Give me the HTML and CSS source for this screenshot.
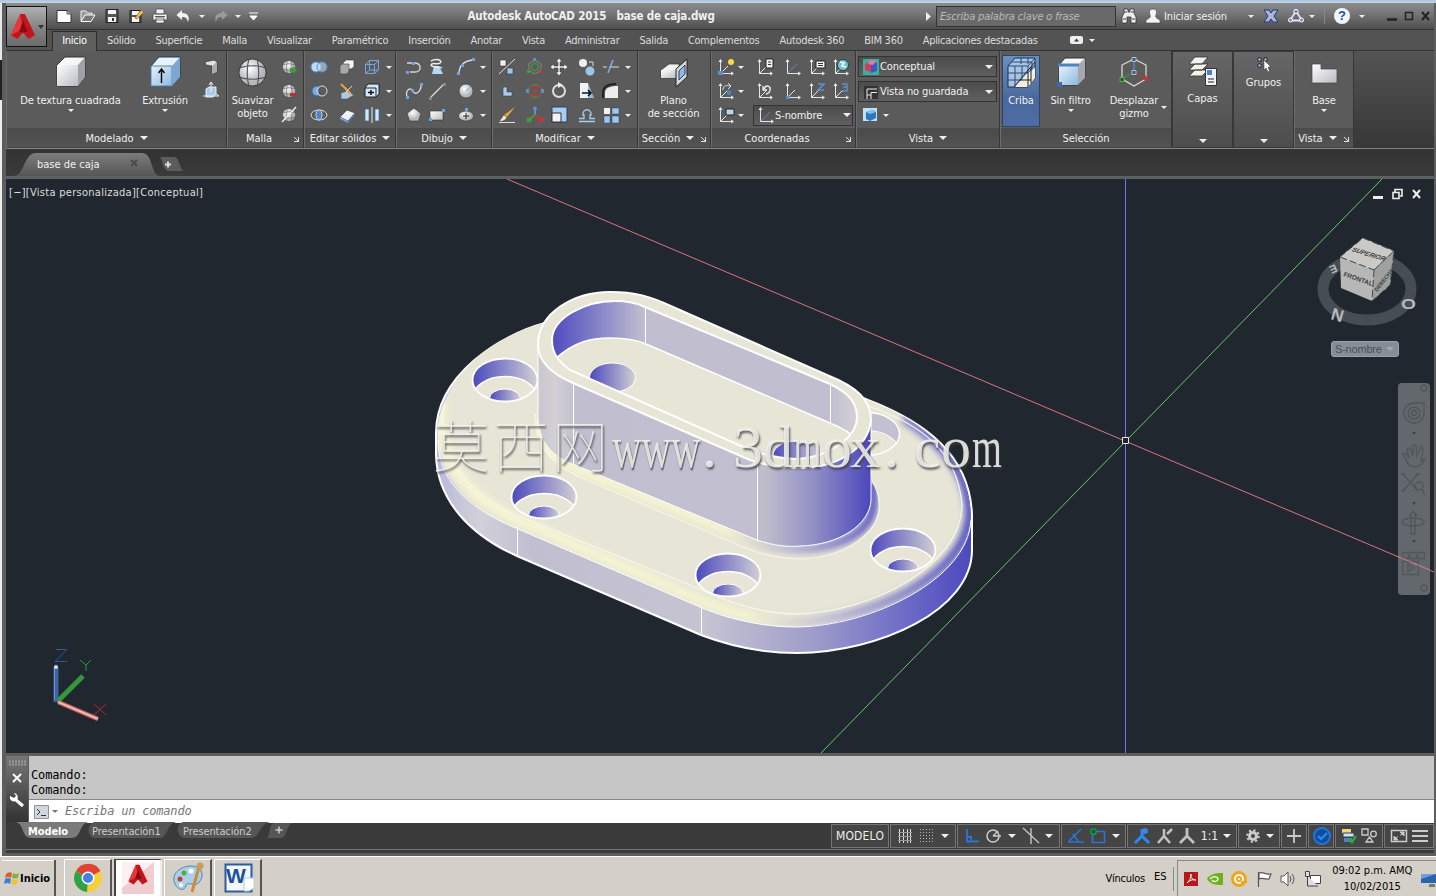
FILE: index.html
```html
<!DOCTYPE html>
<html lang="es">
<head>
  <meta charset="UTF-8">
  <title>Autodesk AutoCAD 2015 - base de caja.dwg</title>
  <link rel="stylesheet" href="styles.css">
</head>
<body>

<!-- shared icons -->
<svg class="sprite" width="0" height="0">
  <defs>
    <linearGradient id="gBox" x1="0" y1="0" x2="1" y2="1"><stop offset="0" stop-color="#fff"/><stop offset="1" stop-color="#b9bbc2"/></linearGradient>
    <linearGradient id="gBlue" x1="0" y1="0" x2="1" y2="1"><stop offset="0" stop-color="#e4f3ff"/><stop offset="1" stop-color="#8fb8de"/></linearGradient>
    <radialGradient id="gBall" cx=".4" cy=".35"><stop offset="0" stop-color="#fff"/><stop offset="1" stop-color="#b4b6ba"/></radialGradient>
    <symbol id="axes" viewBox="0 0 18 18"><path d="M3.500 2V15.500H16M3.500 15.500L11 8" fill="none" stroke="#e6e6e6"/><path d="M1.500 4L3.500 1L5.500 4zM14 13.500L17 15.500L14 17.500z" fill="#eee"/></symbol>
    <symbol id="axesb" viewBox="0 0 18 18"><path d="M3.500 2V15.500H16" fill="none" stroke="#e6e6e6"/><path d="M4 15L13 6" stroke="#5b82c4"/><path d="M1.500 4L3.500 1L5.500 4zM14 13.500L17 15.500L14 17.500z" fill="#eee"/></symbol>
    <symbol id="ball" viewBox="0 0 30 30"><circle cx="15" cy="15" r="14" fill="url(#gBall)" stroke="#222" stroke-width=".8"/><path d="M2 10Q15 6 28 10M2 20Q15 24 28 20M11 2Q8 15 11 28M20 2Q23 15 20 28" fill="none" stroke="#50545c" stroke-width="1.2"/></symbol>
    <symbol id="redA" viewBox="0 0 28 30"><path d="M11 1H16L27 24L20 28L14 21L8 28L1 24z" fill="#c3161c"/><path d="M11 1L14 17L1 24z" fill="#e5383b"/><path d="M14 8L19 20L14 21L10 20z" fill="#8d0b10"/></symbol>
  </defs>
</svg>

<div class="app">

  <header class="titlebar">
    <div class="app-button">
      <svg width="26" height="28"><use href="#redA"/></svg>
      <i class="caret dark"></i>
    </div>
    <div class="qat">
      <svg width="18" height="16"><path d="M2 2.500H12L16 6V14.500H2z" fill="#fff" stroke="#333"/><path d="M12 2.500V6H16" fill="#bbb" stroke="#555"/></svg>
      <svg width="18" height="16"><path d="M2 13V3H7L8 5H13V7" fill="#999" stroke="#eee"/><path d="M2 13.500L6 7H16L12 13.500z" fill="#777" stroke="#fff"/></svg>
      <svg width="18" height="16"><path d="M3 1.500H15V14.500H3z" fill="#555" stroke="#222"/><path d="M5 2H13V6H5zM5 9H13V14H5z" fill="#f4f4f4"/><path d="M9 10H11V13H9z" fill="#333"/></svg>
      <svg width="18" height="16"><path d="M3 2.500H14V14.500H3z" fill="#555" stroke="#222"/><path d="M5 3H12V7H5zM5 9H12V14H5z" fill="#f4f4f4"/><path d="M8 10L14 2L17 4L10 11z" fill="#f0c050" stroke="#74501a" stroke-width=".6"/></svg>
      <svg width="18" height="16"><path d="M5 1H13V6H5zM2 6H16V12H2zM5 10H13V15H5z" fill="#f2f2f2" stroke="#444" stroke-width=".7"/><path d="M4 8.500H14" stroke="#555"/></svg>
      <svg width="18" height="16"><path d="M1.500 7L7 2V5C13 5 15 9 13 14C12 10 11 9 7 9V12z" fill="#f2f2f2"/></svg>
      <i class="caret"></i>
      <svg width="18" height="16"><path d="M16.500 7L11 2V5C5 5 3 9 5 14C6 10 7 9 11 9V12z" fill="#9a9a9a"/></svg>
      <i class="caret"></i>
      <svg width="9" height="9"><path d="M0 1H9M1 4H8L4.500 8z" stroke="#fff" fill="#fff"/></svg>
    </div>
    <h1>Autodesk AutoCAD 2015 &nbsp; base de caja.dwg</h1>
    <div class="infocenter">
      <svg width="6" height="9"><path d="M0 0L5 4.500L0 9z" fill="#eee"/></svg>
      <div class="search">Escriba palabra clave o frase</div>
      <svg width="16" height="16"><path d="M3 1H7V4H9V1H13V5L15 9V15H10V9H6V15H1V9L3 5z" fill="#eee" stroke="#333" stroke-width=".8"/><path d="M2 11H5M11 11H14M3 4H6M10 4H13" stroke="#444"/></svg>
      <svg width="16" height="16"><path d="M8 1C12 1 12 4 11 7C10 9 11 10 15 12V15H1V12C5 10 6 9 5 7C4 4 4 1 8 1z" fill="#f4f4f4" stroke="#444" stroke-width=".6"/></svg>
      <span class="login">Iniciar sesión</span>
      <i class="caret"></i>
      <svg width="16" height="16"><path d="M1 2H6L8 5L10 2H15L11 8L15 14H10L8 11L6 14H1L5 8z" fill="#a9b6dc" stroke="#20397e"/></svg>
      <svg width="18" height="16"><path d="M9 3L15 12.500H3z" fill="none" stroke="#dfe6f5" stroke-width="1.800"/><circle cx="9" cy="3.500" r="2.200" fill="#6c89c4" stroke="#fff"/><circle cx="3.500" cy="12" r="2" fill="#6c89c4" stroke="#fff"/><circle cx="14.500" cy="12" r="2" fill="#6c89c4" stroke="#fff"/></svg>
      <i class="caret"></i>
      <span class="sep"></span>
      <span class="help">?</span>
      <i class="caret"></i>
      <svg class="winbtns" width="48" height="12"><path d="M1 9.500H11" stroke="#222" stroke-width="2.500"/><path d="M19.500 2.500H26.500V9.500H19.500z" fill="none" stroke="#222" stroke-width="1.500"/><path d="M36 2L43 10M43 2L36 10" stroke="#222" stroke-width="2"/></svg>
    </div>
  </header>

  <nav class="tabs">
    <span class="active">Inicio</span><span>Sólido</span><span>Superficie</span><span>Malla</span><span>Visualizar</span><span>Paramétrico</span><span>Inserción</span><span>Anotar</span><span>Vista</span><span>Administrar</span><span>Salida</span><span>Complementos</span><span>Autodesk 360</span><span>BIM 360</span><span>Aplicaciones destacadas</span>
    <svg width="13" height="9"><rect width="13" height="8" rx="2" fill="#eee"/><path d="M4 5.500H9L6.500 2.500z" fill="#333"/></svg>
    <i class="caret"></i>
  </nav>

  <section class="ribbon">
    <div class="panel p-model">
      <div class="body">
        <div class="big wide">
          <svg width="34" height="34"><path d="M3 10L11 2H31V22L24 31H3z" fill="#f6f6f7" stroke="#333"/><path d="M3 10H24V31H3z" fill="url(#gBox)"/><path d="M24 10L31 2V22L24 31z" fill="#9fa1a8"/></svg>
          <span>De textura cuadrada</span><i class="caret"></i>
        </div>
        <div class="big ext">
          <svg width="34" height="34"><path d="M3 11L11 2H32V22L24 31H3z" fill="#e5f3ff" stroke="#203a58"/><path d="M3 11H24V31H3z" fill="url(#gBlue)" stroke="#5d86ad"/><path d="M24 11L32 2V22L24 31z" fill="#7ba7d0"/><path d="M13.500 28V15M10.500 18L13.500 14L16.500 18" stroke="#111" stroke-width="1.500" fill="none"/></svg>
          <span>Extrusión</span><i class="caret"></i>
        </div>
        <div class="grid g1">
          <svg width="18" height="18"><path d="M3 4L12 2L15 4V14L10 16V8L4 7z" fill="#e0e2e6" stroke="#333" stroke-width=".7"/><path d="M10 8L15 4V14L10 16z" fill="#a7abb4"/></svg>
          <svg width="18" height="18"><path d="M4 7L7 5H14V12L11 15H4z" fill="#a9cbea" stroke="#eee"/><path d="M9 10V0M7 3L9 0L11 3M1 14H17M14 12L17 14" stroke="#eee" fill="none"/></svg>
        </div>
      </div>
      <footer>Modelado <i class="caret big-c"></i></footer>
    </div>

    <div class="panel p-mesh">
      <div class="body">
        <div class="big mesh"><svg width="34" height="34"><use href="#ball" x="2" y="3" width="29" height="29"/></svg><span>Suavizar<br>objeto</span></div>
        <div class="grid g1">
          <svg width="18" height="18"><use href="#ball" x="2" y="2" width="14" height="14"/><path d="M10 10H13V8L17 12L13 16V14H10z" fill="#3f9b35"/></svg>
          <svg width="18" height="18"><use href="#ball" x="2" y="2" width="14" height="14"/><path d="M10 11H17V14H10z" fill="#a93636"/></svg>
          <svg width="18" height="18"><use href="#ball" x="2" y="2" width="14" height="14"/><path d="M2 16L16 1" stroke="#eee" stroke-width="1.500"/></svg>
        </div>
      </div>
      <footer class="with-launch">Malla<i class="launch"></i></footer>
    </div>

    <div class="panel p-solid">
      <div class="body"><div class="grid g-solid">
        <svg width="18" height="18"><circle cx="6" cy="9" r="5" fill="#bcdcf7" stroke="#5e8dc8"/><circle cx="12" cy="9" r="5" fill="#bcdcf7" fill-opacity=".6" stroke="#5e8dc8"/></svg>
        <svg width="18" height="18"><path d="M5 5L8 2H16V9L13 11H5z" fill="#f4f4f4" stroke="#333" stroke-width=".6"/><path d="M2 8L4 6H11V13L9 16H2z" fill="#a5a7ad" stroke="#444" stroke-width=".6"/></svg>
        <svg width="18" height="18"><path d="M2.500 6.500H11.500V15.500H2.500zM2.500 6.500L6.500 2.500H15.500L11.500 6.500M15.500 2.500V12L11.500 15.500M6.500 2.500V12H15.500M6.500 12L2.500 15.500" fill="none" stroke="#77a5dc"/></svg>
        <i class="caret"></i>
        <svg width="18" height="18"><circle cx="7" cy="9" r="5" fill="#7ea9dc" stroke="#3667aa"/><circle cx="12" cy="9" r="5" fill="#5a5a5a" stroke="#ddd"/><path d="M9.500 4.500C7 7 7 11 9.500 13.500" fill="none" stroke="#a9cdf2"/></svg>
        <svg width="18" height="18"><path d="M3 11L9 9L16 13L9 17H3z" fill="#a9c9ea" stroke="#555" stroke-width=".6"/><path d="M3 2L13 12" stroke="#eba43d" stroke-width="2"/><path d="M14 4L8 10" stroke="#ddd"/></svg>
        <svg width="18" height="18"><path d="M2 6L5 2H16V12L13 15H2z" fill="#d3e8fa" stroke="#222"/><path d="M2 6H13V15" stroke="#222" fill="none"/><path d="M5 10.500H11M8 8V13" stroke="#111" stroke-width="1.500"/></svg>
        <i class="caret"></i>
        <svg width="18" height="18"><ellipse cx="9" cy="9" rx="8" ry="5" fill="none" stroke="#ddd"/><ellipse cx="9" cy="9" rx="3" ry="5" fill="#4f86c8" stroke="#b5d4f2"/></svg>
        <svg width="18" height="18"><path d="M2 11L9 4L17 7L10 15z" fill="#eef1f5" stroke="#333" stroke-width=".6"/><path d="M2 11L10 15V17L2 13z" fill="#76a2d4"/><path d="M10 15L17 7V9L10 17z" fill="#4f7bb3"/></svg>
        <svg width="18" height="18"><path d="M2 3H6V15H2zM12 3H16V15H12z" fill="#cfe6fb" stroke="#416896" stroke-width=".7"/><path d="M9 1V17" stroke="#eee"/></svg>
        <i class="caret"></i>
      </div></div>
      <footer>Editar sólidos <i class="caret big-c"></i></footer>
    </div>

    <div class="panel p-draw">
      <div class="body"><div class="grid g-draw">
        <svg width="18" height="18"><path d="M2 5H9C17 5 17 14 10 14H5" fill="none" stroke="#d8d8d8" stroke-width="1.300"/><path d="M1 13h3v3H1zM7 4h3v3H7z" fill="#6fa3e0"/></svg>
        <svg width="18" height="18"><path d="M6 8H11L15 16H4z" fill="#b6d8f5"/><path d="M3 3C8 0 15 2 12 5C9 7 4 4 3 7C4 10 11 8 14 10" fill="none" stroke="#eee" stroke-width="1.500"/></svg>
        <svg width="18" height="18"><path d="M2 16C2 8 6 3 16 2" fill="none" stroke="#ddd" stroke-width="1.300"/><path d="M0 14h3v3H0zM4 6h3v3H4zM15 0h3v3h-3z" fill="#6fa3e0"/></svg>
        <i class="caret"></i>
        <svg width="18" height="18"><path d="M2 15C0 7 6 5 8 9C10 14 16 10 16 3" fill="none" stroke="#ddd" stroke-width="1.300"/><path d="M1 14h3v3H1zM6 7h3v3H6zM15 1h3v3h-3z" fill="#6fa3e0"/></svg>
        <svg width="18" height="18"><path d="M2 16L16 2" stroke="#ddd" stroke-width="1.300"/><path d="M1 15h3v3H1zM15 1h3v3h-3z" fill="#888"/></svg>
        <svg width="18" height="18"><circle cx="9" cy="9" r="7" fill="url(#gBall)" stroke="#333" stroke-width=".6"/><path d="M9 9L13 5" stroke="#6f9fd6"/></svg>
        <i class="caret"></i>
        <svg width="18" height="18"><path d="M9 2L16 7.500L13.500 15H4.500L2 7.500z" fill="url(#gBall)" stroke="#333" stroke-width=".6"/></svg>
        <svg width="18" height="18"><path d="M2 5H15V14H2z" fill="url(#gBox)" stroke="#333" stroke-width=".6"/><path d="M1 12h3v3H1zM14 3h3v3h-3z" fill="#6fa3e0"/></svg>
        <svg width="18" height="18"><ellipse cx="9" cy="10" rx="7.500" ry="5" fill="url(#gBall)" stroke="#333" stroke-width=".6"/><path d="M6 10H12M9 7V13" stroke="#222"/><path d="M8 2h3v3H8z" fill="#6fa3e0"/></svg>
        <i class="caret"></i>
      </div></div>
      <footer>Dibujo <i class="caret big-c"></i></footer>
    </div>

    <div class="panel p-mod">
      <div class="body"><div class="grid g-mod">
        <svg width="18" height="18"><path d="M2 2H8V8H2z" fill="#f0f0f0" stroke="#333" stroke-width=".6"/><path d="M9 10H15V16H9z" fill="#9fc4ea" stroke="#333" stroke-width=".6"/><path d="M1 16L17 1" stroke="#ddd"/></svg>
        <svg width="18" height="18"><path d="M9 2L15 5.500V12.500L9 16L3 12.500V5.500z" fill="none" stroke="#888"/><circle cx="9" cy="9" r="3.500" fill="none" stroke="#42993c" stroke-width="1.500"/><path d="M7 0h3v3H7z" fill="#5d8fd0"/><path d="M1 12h3v3H1z" fill="#3fa03a"/><path d="M14 12h3v3h-3z" fill="#c33"/></svg>
        <svg width="18" height="18"><path d="M9 0L12 4H10V8H14V6L18 9L14 12V10H10V14H12L9 18L6 14H8V10H4V12L0 9L4 6V8H8V4H6z" fill="#f0f0f0" stroke="#333" stroke-width=".5"/></svg>
        <svg width="18" height="18"><circle cx="5" cy="5" r="4" fill="#f0f0f0"/><circle cx="12" cy="13" r="4.500" fill="#9fc4ea"/><path d="M11 4H15V8" fill="none" stroke="#ddd"/></svg>
        <svg width="18" height="18"><path d="M1 9H5M7 9H17" stroke="#ddd"/><path d="M6 15L11 2" stroke="#7fb0e8" stroke-width="1.500"/></svg>
        <i class="caret"></i>
        <svg width="18" height="18"><path d="M5 5H9V10H14V14H5z" fill="#a9cbec" stroke="#345" stroke-width=".6"/></svg>
        <svg width="18" height="18"><circle cx="9" cy="9" r="6.500" fill="none" stroke="#3fa03a"/><ellipse cx="9" cy="9" rx="8" ry="5" fill="none" stroke="#c33"/><circle cx="9" cy="9" r="2" fill="#c33"/><path d="M0 7h3v4H0zM15 7h3v4h-3z" fill="#5d8fd0"/></svg>
        <svg width="18" height="18"><circle cx="9" cy="9" r="6" fill="none" stroke="#ddd" stroke-width="2"/><path d="M8 0L13 3L8 6z" fill="#eee"/></svg>
        <svg width="18" height="18"><path d="M2 1H10V16H2z" fill="#eef4fa"/><path d="M10 1L16 16H10z" fill="#8ebbe5"/><path d="M4 11H12M10 8L13 11L10 14" stroke="#111" fill="none" stroke-width="1.500"/></svg>
        <svg width="18" height="18"><path d="M3 16V11C3 6 7 4 16 4V16z" fill="#eee"/><path d="M1 16V11C1 5 5 2 14 2" fill="none" stroke="#222" stroke-width="2"/></svg>
        <i class="caret"></i>
        <svg width="18" height="18"><path d="M17 1L9 11L6 9z" fill="#eda53c"/><path d="M9 11L6 9C4 10 4 13 1 15C5 16 8 14 9 11z" fill="#f6e9c0" stroke="#333" stroke-width=".5"/><path d="M1 16.500H17" stroke="#ddd"/></svg>
        <svg width="18" height="18"><path d="M9 9V3" stroke="#5d8fd0" stroke-width="2"/><path d="M9 9L2 14" stroke="#3fa03a" stroke-width="2"/><path d="M9 9L16 14" stroke="#c33" stroke-width="2"/><circle cx="9" cy="2.500" r="2" fill="#5d8fd0"/><circle cx="3" cy="14" r="2.500" fill="#3fa03a"/><circle cx="15" cy="14" r="2.500" fill="#c33"/></svg>
        <svg width="18" height="18"><path d="M2 1H17V16H2z" fill="#a9cdee" stroke="#246"/><path d="M2 7H11V16H2z" fill="#f2f2f2" stroke="#333"/></svg>
        <svg width="18" height="18"><path d="M1 15.500H17M1 12.500H6V9H5C4 2 14 2 13 9H12V12.500H17" fill="none" stroke="#a9cdee" stroke-width="1.300"/></svg>
        <svg width="18" height="18"><path d="M2 2H8V8H2z" fill="#f2f2f2"/><path d="M10 2H17V8H10zM2 10H8V17H2zM10 10H17V17H10z" fill="#9fc8f0" stroke="#246" stroke-width=".5"/></svg>
        <i class="caret"></i>
      </div></div>
      <footer>Modificar <i class="caret big-c"></i></footer>
    </div>

    <div class="panel p-sec">
      <div class="body">
        <div class="big sec">
          <svg width="34" height="34"><path d="M4 15L12 9H22V23H4z" fill="#f2f2f3" stroke="#333" stroke-width=".7"/><path d="M4 15H19V23H4z" fill="url(#gBox)"/><path d="M19 14L30 4V22L19 32z" fill="#d4d6db" stroke="#222"/><path d="M22 16L28 10V19L22 25z" fill="#8fb9e4" stroke="#345"/></svg>
          <span>Plano<br>de sección</span>
        </div>
      </div>
      <footer class="with-launch">Sección <i class="caret big-c"></i><i class="launch"></i></footer>
    </div>

    <div class="panel p-coord">
      <div class="body"><div class="grid g-coord">
        <svg width="18" height="18"><use href="#axes"/><circle cx="14" cy="4" r="3" fill="#ffd84a"/><path d="M1 13h5v4H1z" fill="#5d8fd0"/></svg>
        <i class="caret"></i>
        <svg width="18" height="18"><use href="#axes"/><path d="M10 1H17V10H10z" fill="#f4f4f4" stroke="#222"/><path d="M12 4H15M12 6.500H15" stroke="#333"/></svg>
        <svg width="18" height="18"><use href="#axesb"/></svg>
        <svg width="18" height="18"><use href="#axes"/><path d="M8 3H17V10H8z" fill="#f4f4f4" stroke="#222"/><path d="M10 5.500H15M10 7.500H15" stroke="#333"/></svg>
        <svg width="18" height="18"><use href="#axes"/><circle cx="11" cy="7" r="5.500" fill="#79c3cf" stroke="#245"/><path d="M8 4L12 5L10 8L14 9" stroke="#eaffff" fill="none" stroke-width="1.500"/></svg>
        <svg width="18" height="18"><use href="#axes"/><path d="M6 8C6 3 10 3 13 4M11 1L14 4L11 7" fill="none" stroke="#ddd"/><path d="M10 8H14V13H10z" fill="#4c7fb8"/></svg>
        <i class="caret"></i>
        <svg width="18" height="18"><use href="#axes"/><path d="M8 7C10 2 15 4 14 8C14 10 12 12 10 12M7 4V8H11" fill="none" stroke="#eee" stroke-width="1.300"/></svg>
        <svg width="18" height="18"><use href="#axes"/><path d="M2 14h4v3H2z" fill="#5d8fd0"/></svg>
        <svg width="18" height="18"><use href="#axes"/><path d="M10 2H16L10 8H16" fill="none" stroke="#5d8fd0" stroke-width="1.600"/></svg>
        <svg width="18" height="18"><use href="#axes"/><path d="M10 2H15V5H11M15 5V9H10" fill="none" stroke="#5d8fd0" stroke-width="1.400"/></svg>
        <svg width="18" height="18"><use href="#axes"/><path d="M9 3H17V9H9z" fill="#b7d8f5" stroke="#222"/></svg>
        <i class="caret"></i>
        <div class="combo ucs"><svg width="18" height="18"><use href="#axesb"/></svg><span>S-nombre</span><i class="caret big-c"></i></div>
      </div></div>
      <footer class="with-launch">Coordenadas<i class="launch"></i></footer>
    </div>

    <div class="panel p-view">
      <div class="body col">
        <div class="combo"><svg width="18" height="18"><path d="M1 1H17V17H1z" fill="#3fae9f"/><path d="M3 6L9 3V14L3 12z" fill="#d63a55"/><path d="M9 3L15 5V13L9 15z" fill="#3d58c4"/><path d="M8 2L14 3L11 7L6 6z" fill="#e87c9a"/></svg><span>Conceptual</span><i class="caret big-c"></i></div>
        <div class="combo"><svg width="18" height="18"><path d="M2 3H16V16H2z" fill="#333"/><path d="M5 16V6H15M9 16V9.500H15M5 12H9" fill="none" stroke="#eee"/></svg><span>Vista no guardada</span><i class="caret big-c"></i></div>
        <div class="viewrow"><svg width="16" height="16"><path d="M1 1H15V14H1z" fill="#bfe0f5"/><path d="M4 5L11 3L14 5V11L8 14L4 12z" fill="#2f78bd"/><path d="M4 5L11 3L14 5L8 7z" fill="#7fc0ef"/></svg><i class="caret"></i></div>
      </div>
      <footer>Vista <i class="caret big-c"></i></footer>
    </div>

    <div class="panel p-sel">
      <div class="body">
        <div class="big criba">
          <svg width="34" height="34"><path d="M4 10L11 2H31V22L24 31H4z" fill="#a9c4e2" stroke="#1c2f4d"/><path d="M4 17H24L31 9M4 24H24L31 16M11 10V31M18 10V31M4 10H24V31M24 10L31 2M8 6H28V26M17 2V8M24 2V8" fill="none" stroke="#2b4a78"/><path d="M11 31L24 17L31 12V22L24 31z" fill="#f0efe2"/><path d="M10 31L31 6M24 16V31M16 24H27M27 11V27" stroke="#222" fill="none"/></svg>
          <span>Criba</span>
        </div>
        <div class="big filtro">
          <svg width="34" height="34"><path d="M5 10L11 3H31V23L24 30H5z" fill="#f7f7f7" stroke="#333"/><path d="M5 10H24V30H5z" fill="url(#gBlue)"/><path d="M24 10L31 3V23L24 30z" fill="#a6a8ae"/><path d="M4 10H25" stroke="#4f83c0" stroke-width="3"/><path d="M3 27h5v5H3z" fill="#3a6cb4"/></svg>
          <span>Sin filtro</span><i class="caret"></i>
        </div>
        <div class="big gizmo">
          <svg width="34" height="34"><path d="M17 4L29 10V24L17 31L5 24V10z" fill="none" stroke="#e4e0cf" stroke-width="1.200"/><path d="M17 5V17" stroke="#5e92dd"/><path d="M17 17L5 24" stroke="#3fa03a"/><path d="M17 17L29 24" stroke="#c33"/><path d="M15 2.500h4v4h-4zM15 15.500h4v4h-4z" fill="#555" stroke="#9ec4f4"/><path d="M3 22.500h4v4H3z" fill="#245a20" stroke="#4fb948"/><path d="M28 20L33 26L27 25z" fill="#c33"/></svg>
          <span>Desplazar<br>gizmo</span>
        </div>
        <i class="caret gz"></i>
      </div>
      <footer>Selección</footer>
    </div>

    <div class="panel closed">
      <svg width="34" height="34"><path d="M3 9L9 2H22L16 9zM3 15L9 9H22L16 15zM3 21L9 15H22L16 21z" fill="#f4f2ea" stroke="#333" stroke-width=".8"/><path d="M19.500 13.500H30.500V30.500H19.500z" fill="#eef4fa" stroke="#333"/><path d="M21 15H26V20H21z" fill="#4f83c0"/><path d="M22 24H28M22 27H28" stroke="#222"/></svg>
      <span>Capas</span><i class="caret big-c"></i>
    </div>
    <div class="panel closed groups">
      <svg width="18" height="18"><path d="M3 3h3v3H3zM3 9h3v3H3zM9 3h3v3H9z" fill="#cfe0ff" stroke="#223"/><path d="M9 5V15L11 13L13 17L14.500 16L13 12H16z" fill="#fff" stroke="#333" stroke-width=".5"/></svg>
      <span>Grupos</span><i class="caret big-c"></i>
    </div>
    <div class="panel p-base">
      <div class="body">
        <div class="big base">
          <svg width="34" height="34"><path d="M5 9H14V14H30V28H5z" fill="url(#gBox)" stroke="#444" stroke-width=".7"/></svg>
          <span>Base</span><i class="caret"></i>
        </div>
      </div>
      <footer class="with-launch">Vista <i class="caret big-c"></i><i class="launch"></i></footer>
    </div>
  </section>

  <div class="doctabs">
    <svg width="200" height="28">
      <defs><linearGradient id="gTab" x1="0" y1="0" x2="0" y2="1"><stop offset="0" stop-color="#7c7c7c"/><stop offset="1" stop-color="#565656"/></linearGradient></defs>
      <path d="M8 27C18 27 18 4 30 4H136C147 4 145 27 154 27z" fill="url(#gTab)"/>
      <path d="M153 8H168C174 8 173 22 179 22H163C156 22 157 8 153 8z" fill="#5c5c5c"/>
      <path d="M125 11L131 17M131 11L125 17" stroke="#4b4b4b" stroke-width="2"/>
      <path d="M159 15.500H165M162 12.500V18.500" stroke="#ddd" stroke-width="2"/>
    </svg>
    <span>base de caja</span>
  </div>

  <main class="viewport">
    <!-- drawing area, page units -->
    <svg class="drawing" viewBox="6 179 1428 574" width="1428" height="574">
      <defs>
        <linearGradient id="side" gradientUnits="userSpaceOnUse" x1="436" y1="0" x2="974" y2="0">
          <stop offset="0" stop-color="#b9b8dc"/><stop offset=".08" stop-color="#d2d0d8"/><stop offset=".18" stop-color="#c1bed0"/><stop offset=".5" stop-color="#c6c4d2"/><stop offset=".7" stop-color="#9f9dca"/><stop offset=".88" stop-color="#6b69c6"/><stop offset="1" stop-color="#4b48be"/>
        </linearGradient>
        <linearGradient id="tube" gradientUnits="userSpaceOnUse" x1="538" y1="0" x2="872" y2="0">
          <stop offset="0" stop-color="#c9c7cf"/><stop offset=".05" stop-color="#d2d0d3"/><stop offset=".12" stop-color="#c1bed0"/><stop offset=".64" stop-color="#c1bfd0"/><stop offset=".68" stop-color="#bfbdcb"/><stop offset=".82" stop-color="#9391c5"/><stop offset="1" stop-color="#4a46bb"/>
        </linearGradient>
        <linearGradient id="inside" gradientUnits="userSpaceOnUse" x1="552" y1="0" x2="860" y2="0">
          <stop offset="0" stop-color="#4f4bc0"/><stop offset=".12" stop-color="#7a78c5"/><stop offset=".3" stop-color="#c1bed0"/><stop offset=".9" stop-color="#c1bed0"/><stop offset="1" stop-color="#d6d4d6"/>
        </linearGradient>
        <linearGradient id="holeg"><stop offset="0" stop-color="#4c49bd"/><stop offset=".5" stop-color="#8d8bc8"/><stop offset="1" stop-color="#d2d0d4"/></linearGradient>
        <linearGradient id="fil" gradientUnits="userSpaceOnUse" x1="436" y1="0" x2="974" y2="0">
          <stop offset="0" stop-color="#f7f6d2"/><stop offset=".58" stop-color="#f4f3d2"/><stop offset=".72" stop-color="#c5c3d4"/><stop offset="1" stop-color="#5553c2"/>
        </linearGradient>
        <linearGradient id="fil2" gradientUnits="userSpaceOnUse" x1="536" y1="0" x2="880" y2="0">
          <stop offset="0" stop-color="#f8f7cf"/><stop offset=".55" stop-color="#f4f3d0"/><stop offset=".75" stop-color="#b5b3d2"/><stop offset="1" stop-color="#5552c1"/>
        </linearGradient>
        <filter id="soft"><feGaussianBlur stdDeviation="3"/></filter>
        <clipPath id="topClip"><path id="topFace" d="M545 322C500 335 447 368 438 425C434 465 455 503 518 529L700 607C735 622 770 627 797 627C870 624 971 580 971 515C966 455 925 422 868 400L700 330z"/></clipPath>
        <clipPath id="footClip"><path d="M535 413C533 447 555 465 575 475L743 547C770 558 790 559 803 559C845 557 882 532 879 503C879 496 877 489 872 481V400H535z"/></clipPath>
        <clipPath id="ringClip"><path d="M552 340C552 318 585 301 615 301C627 301 637 303 645 307L830 384C849 393 857 403 857 417C857 437 830 457 797 459C780 459 765 455 750 450L570 370C559 362 552 354 552 340z"/></clipPath>
        <clipPath id="hc"><ellipse cx="0" cy="0" rx="32.500" ry="21.500"/></clipPath>
        <g id="hole">
          <ellipse rx="32.500" ry="21.500" fill="url(#holeg)"/>
          <g clip-path="url(#hc)">
            <ellipse cy="18" rx="32.500" ry="21.500" fill="#e7e5d6" stroke="#fff" stroke-width="1.500"/>
            <ellipse cy="18.500" rx="15.500" ry="9.500" fill="url(#holeg)" stroke="#fff"/>
          </g>
          <ellipse rx="32.500" ry="21.500" fill="none" stroke="#fff" stroke-width="1.800"/>
        </g>
      </defs>

      <path d="M507 179L1434 572" stroke="#d9747e"/>
      <path d="M1382 179L821 753" stroke="#6cc46c"/>

      <!-- base plate -->
      <path d="M545 323C500 335 436 375 436 433V455C437 500 470 535 517 556L701 635C735 648 765 653 797 653C880 652 972 610 972 550V515C970 455 925 422 868 400L700 330z" fill="url(#side)" stroke="#fff" stroke-width="2"/>
      <use href="#topFace" fill="#e7e5d6"/>
      <g clip-path="url(#topClip)">
        <path d="M442 400C434 455 465 498 523 522L700 600C735 615 770 622 797 622C870 619 968 577 970 512C969 475 943 442 903 418" fill="none" stroke="url(#fil)" stroke-width="10" filter="url(#soft)"/>
      </g>
      <path d="M438 440C438 475 460 505 518 529L700 607C735 622 770 627 797 627C870 626 968 580 971 520" fill="none" stroke="#fff"/>
      <path d="M444 405C436 450 462 495 523 518L700 589C735 606 770 614 797 614C870 612 961 567 962 505C958 455 925 425 868 406" fill="none" stroke="#f7f6ea" stroke-width="1.300"/>
      <path d="M517.500 527V556M701.500 607V635" stroke="#fff"/>

      <use href="#hole" x="505" y="380"/>
      <use href="#hole" x="544" y="497"/>
      <use href="#hole" x="728" y="575"/>
      <use href="#hole" x="903" y="550"/>
      <g transform="translate(867 434)"><ellipse rx="32.500" ry="21.500" fill="#c3c1d1"/><ellipse cy="18" rx="32.500" ry="21.500" fill="#e7e5d6" stroke="#fff" clip-path="url(#hc)"/><ellipse rx="32.500" ry="21.500" fill="none" stroke="#fff" stroke-width="1.500"/></g>

      <!-- tube -->
      <g clip-path="url(#footClip)">
        <path d="M537 420C537 450 560 464 580 470L757 543C800 558 872 546 873 504V480" fill="none" stroke="url(#fil2)" stroke-width="9" filter="url(#soft)"/>
      </g>
      <path d="M535 413C533 447 555 465 575 475L743 547C770 558 790 559 803 559C845 557 882 532 879 503C879 496 877 489 872 481" fill="none" stroke="#f7f6e6" stroke-width="1.200"/>
      <path d="M538 345V420C540 445 555 458 575 465L757 540C775 546 788 547 800 546C840 545 870 524 871 500V420z" fill="url(#tube)" stroke="#fff"/>
      <path d="M573.500 383V464M757.500 462V540" stroke="#fff"/>
      <path d="M538 345C538 312 575 292 610 292C635 292 650 296 673 307L827 375C857 387 871 400 871 420C868 450 835 468 800 468C780 468 765 465 750 460L573 383C550 373 538 360 538 345z" fill="#e7e5d6" stroke="#fff" stroke-width="2"/>
      <g clip-path="url(#ringClip)">
        <path d="M540 290H870V470H540z" fill="url(#inside)"/>
        <path d="M556 358C575 342 590 338 610 338C625 338 637 340 646 344L830 423C845 429 852 434 856 440V470H540z" fill="#e7e5d6" stroke="#fff" stroke-width="1.500"/>
        <path d="M645.500 303V344M830.500 383V423" stroke="#fff"/>
        <ellipse cx="612.500" cy="377.500" rx="23" ry="14.500" fill="url(#holeg)" stroke="#fff"/>
        <ellipse cx="797" cy="455" rx="24" ry="14" fill="url(#holeg)" stroke="#fff"/>
      </g>
      <path d="M552 340C552 318 585 301 615 301C627 301 637 303 645 307L830 384C849 393 857 403 857 417C857 437 830 457 797 459C780 459 765 455 750 450L570 370C559 362 552 354 552 340z" fill="none" stroke="#fff" stroke-width="2"/>

      <!-- watermark -->
      <g class="mark">
        <text class="cjk" x="433 493 552" y="467">莫西网</text>
        <text transform="translate(612 467) scale(.68 1)">www</text>
        <text x="702 733 763" y="467">.3d</text>
        <text transform="translate(793.500 467) scale(.6 1)">m</text>
        <text x="822 850 884 914 941" y="467">ox.co</text>
        <text transform="translate(972 467) scale(.64 1)">m</text>
      </g>

      <!-- crosshair -->
      <path d="M1125.500 179V437M1125.500 444V753" stroke="#7474f0"/>
      <path d="M1122.500 437.500h6v6h-6z" fill="#20272e" stroke="#e8e8e8"/>

      <!-- UCS icon -->
      <path d="M56 702V667" stroke="#3c65a8" stroke-width="5"/><path d="M54.500 700V668" stroke="#6d94cc"/><circle cx="56" cy="667" r="2" fill="#cfe0f4"/>
      <path d="M58 701L83 676" stroke="#32983a" stroke-width="5"/>
      <path d="M58 702L98 719" stroke="#c96a6a" stroke-width="4.500"/><path d="M58 702L98 719" stroke="#f5c4c0" stroke-width="1.500"/>
      <path d="M56 649.500H67L55 661.500H67" fill="none" stroke="#2c5a9c"/>
      <path d="M80 660L86 665L91 660M86 665V671" fill="none" stroke="#2f9b3a"/>
      <path d="M94 704L106 715M106 704L94 715" stroke="#a52a34"/>

      <!-- view cube -->
      <ellipse cx="1367" cy="289" rx="44" ry="31" fill="none" stroke="#464d54" stroke-width="11"/>
      <path d="M1340 257L1363 238L1394 251L1390 285L1372 301L1341 288z" fill="#b7b8b6"/>
      <path d="M1340 257L1363 238L1394 251L1374 270z" fill="#c9c9c6" stroke="#41464a" stroke-dasharray="7 3"/>
      <path d="M1374 270L1372 301L1390 285L1394 251z" fill="#9fa19f" stroke="#41464a" stroke-dasharray="7 3"/>
      <text class="cube" transform="translate(1351 251) rotate(17) skewX(-25)">SUPERIOR</text>
      <text class="cube" transform="translate(1343 276) rotate(19)">FRONTAL</text>
      <text class="cube side" transform="translate(1377 292) rotate(-52)">DERECHA</text>
      <g class="compass"><text font-size="11" transform="translate(1335 264) rotate(155)">E</text><text x="1331" y="321" font-size="17" transform="rotate(16 1338 316)">N</text><text transform="translate(1401 309) scale(1.200 .9)" font-size="16">O</text></g>

      <!-- navigation bar -->
      <rect x="1398" y="383" width="32" height="212" rx="4" fill="#7b8285" fill-opacity=".72"/>
      <g fill="none" stroke="#50565a" stroke-width="1.300">
        <circle cx="1424" cy="388" r="3"/><circle cx="1424" cy="588" r="3"/>
        <path d="M1424 403H1414A10 10 0 1 0 1424 413z"/><circle cx="1414" cy="413" r="6"/><circle cx="1414" cy="413" r="2.500"/>
        <path d="M1406 459L1402 454L1405 453L1409 458L1407 449L1410 448L1413 456V445H1416L1417 456L1421 447L1423 449L1421 461L1425 459C1420 470 1408 469 1406 459z"/>
        <path d="M1403 474L1418 491M1418 474L1403 491"/><circle cx="1419" cy="486" r="4"/><path d="M1422 489L1425 495M1401 474h4M1416 474h4M1401 491h4"/>
        <ellipse cx="1413" cy="522" rx="11" ry="4"/><path d="M1411 534V515L1409 516L1413 511L1417 516L1415 515V534z"/>
        <path d="M1402.500 552.500h6v6h-6zM1410.500 552.500h6v6h-6zM1418.500 552.500h6v6h-6zM1402.500 561.500h16v13h-16zM1408 564V572L1414 568z"/>
      </g>
      <path d="M1412 432h4l-2 3zM1412 502h4l-2 3zM1412 540h4l-2 3z" fill="#3d4448"/>
      <path d="M1398 556.500L1430 570" stroke="#d9747e"/>
    </svg>

    <span class="viewlabel">[−][Vista personalizada][Conceptual]</span>
    <svg class="viewbtns" width="50" height="12"><path d="M0 9.500H10" stroke="#eee" stroke-width="3"/><path d="M20 4.500H26V10.500H20zM22 4V1.500H29V8H27" fill="none" stroke="#eee" stroke-width="1.600"/><path d="M40 2L47 10M47 2L40 10" stroke="#eee" stroke-width="2"/></svg>
    <div class="wcs">S-nombre<i></i></div>
  </main>

  <section class="command">
    <div class="grip">
      <svg width="22" height="65"><path d="M3 5.500H21M3 8.500H21" stroke="#999" stroke-width="2" stroke-dasharray="2 1"/><path d="M7 18L15 26M15 18L7 26" stroke="#fff" stroke-width="2"/><path d="M10 44L17 50" stroke="#fff" stroke-width="3"/><path d="M4 40C3 45 8 47 11 44C13 41 11 37 8 37L10 40L8 42z" fill="#fff"/></svg>
    </div>
    <div class="cmdlines">
      <p>Comando:</p>
      <p>Comando:</p>
      <div class="prompt"><svg width="15" height="14"><path d="M.5.500H14.500V13.500H.5z" fill="#cfd6de" stroke="#8a939d"/><path d="M3 4L6 7L3 10M7 10.500H12" fill="none" stroke="#333"/></svg><i class="caret grey"></i><em>Escriba un comando</em></div>
    </div>
  </section>

  <footer class="bottom">
    <div class="layouts">
      <svg width="290" height="18">
        <path d="M88 0C80 3 81 16 90 16H153C162 16 160 3 170 0zM177 0C168 3 171 16 180 16H244C255 16 252 3 264 0zM261 16H275C281 16 280 4 286 1H268C262 3 265 13 261 16z" fill="#565656"/>
        <path d="M10 0C19 3 15 16 26 16H65C76 16 72 3 82 0z" fill="#7b7b7b"/>
        <path d="M269.500 8H276.500M273 4.500V11.500" stroke="#ccc" stroke-width="1.500"/>
      </svg>
      <span class="on">Modelo</span><span>Presentación1</span><span>Presentación2</span>
    </div>
    <div class="status">
      <div class="s-model">MODELO</div>
      <div class="s-grid">
        <svg width="16" height="16"><path d="M1 4.500H15M1 8.500H15M1 12.500H15" stroke="#999"/><path d="M2.500 1V15M6.500 1V15M10.500 1V15M13.500 1V15" stroke="#ddd" stroke-dasharray="3 1"/></svg>
        <svg width="16" height="16"><path d="M1 1.500H15M1 4.500H15M1 7.500H15M1 10.500H15M1 13.500H15" stroke="#b5b5b5" stroke-dasharray="1 2"/></svg>
        <i class="caret big-c"></i>
      </div>
      <div class="s-ortho">
        <svg width="16" height="16"><path d="M3 1V13.500H15M3 9H7V13" fill="none" stroke="#2b74d8" stroke-width="1.800"/></svg>
        <svg width="18" height="16"><circle cx="8" cy="8" r="6" fill="none" stroke="#ccc" stroke-width="1.500"/><path d="M8 8H16M8 8L13 3" stroke="#ccc" stroke-width="1.300"/></svg>
        <i class="caret big-c"></i>
        <svg width="18" height="18"><path d="M9 1V17M1 1L17 16" stroke="#c4c4c4" stroke-width="1.400"/></svg>
        <i class="caret big-c"></i>
      </div>
      <div class="s-snap">
        <svg width="18" height="16"><path d="M1 14H17M2 13L14 1M6 6L11 13" stroke="#2b74d8" stroke-width="1.700"/></svg>
        <svg width="18" height="16"><path d="M5 3.500H15.500V14.500H3.500V6" fill="none" stroke="#2b74d8" stroke-width="1.600"/><path d="M2 1h5v5H2z" fill="#062" stroke="#2a4"/></svg>
        <i class="caret big-c"></i>
      </div>
      <div class="s-anno">
        <svg width="18" height="18"><path d="M9 2V9L2 16M9 9L16 16" stroke="#2b8af0" stroke-width="3" fill="none"/><circle cx="12" cy="4" r="3" fill="#3f83da"/></svg>
        <svg width="18" height="18"><path d="M8 2V9L2 16M8 9L14 16M11 7L16 2" stroke="#c2c2c2" stroke-width="2.500" fill="none"/></svg>
        <svg width="18" height="18"><path d="M9 1V9L2 16M9 9L16 16" stroke="#c2c2c2" stroke-width="2.800" fill="none"/></svg>
        <span>1:1</span><i class="caret big-c"></i>
      </div>
      <div class="s-gear"><svg width="16" height="16"><circle cx="8" cy="8" r="3.500" fill="none" stroke="#ccc" stroke-width="3"/><circle cx="8" cy="8" r="5.800" fill="none" stroke="#ccc" stroke-width="2" stroke-dasharray="2.200 2.300"/></svg><i class="caret big-c"></i></div>
      <div class="s-plus"><svg width="16" height="16"><path d="M8 1V15M1 8H15" stroke="#ccc" stroke-width="1.800"/></svg></div>
      <div class="s-hw"><svg width="20" height="20"><circle cx="10" cy="10" r="8" fill="#104d9a" stroke="#1e78df" stroke-width="2"/><path d="M6 10L9 13L15 7" fill="none" stroke="#2b8af0" stroke-width="2"/></svg></div>
      <div class="s-iso">
        <svg width="18" height="18"><path d="M2 2H11V6H2z" fill="#f0d878"/><path d="M3 6H14V10H3z" fill="#cfe1f5" stroke="#345"/><path d="M4 11H12V15H4z" fill="#4f83c0"/><path d="M9 12L12 15L16 9" stroke="#37a637" stroke-width="2.500" fill="none"/></svg>
        <svg width="18" height="18"><path d="M2 2h6v6H2zM6 15H13L9.500 10z" fill="none" stroke="#ccc" stroke-width="1.300"/><circle cx="13.500" cy="7" r="2.800" fill="none" stroke="#ccc" stroke-width="1.300"/></svg>
      </div>
      <div class="s-full">
        <svg width="18" height="14"><path d="M1.500 1.500H16.500V12.500H1.500z" fill="none" stroke="#ccc" stroke-width="1.500"/><path d="M10 3H14V7zM4 7V11H8zM5 10L8 7.500M10 6.500L13 4" fill="#ccc" stroke="#ccc"/></svg>
        <svg width="18" height="16"><path d="M1 3H17M1 8H17M1 13H17" stroke="#ccc" stroke-width="2"/></svg>
      </div>
    </div>
  </footer>
</div>

<div class="taskbar">
  <div class="start"><svg width="16" height="16"><path d="M2 4Q5 1 8 3L7 8Q4 6 1 8z" fill="#e0582c"/><path d="M9 3Q12 5 15 3L14 8Q11 9 8 8z" fill="#7bb93c"/><path d="M1 9Q4 7 7 9L6 14Q3 12 0 14z" fill="#3c82d2"/><path d="M8 9Q11 11 14 9L13 14Q10 15 7 14z" fill="#f2c22f"/></svg><b>Inicio</b></div>
  <div class="task"><svg width="30" height="30"><circle cx="15" cy="15" r="14" fill="#f7cf3a"/><path d="M15 15L3 8A14 14 0 0 1 27.500 8z" fill="#dd4437"/><path d="M15 15L2.900 8A14 14 0 0 0 14 29z" fill="#30a24c"/><circle cx="15" cy="15" r="6.500" fill="#fff"/><circle cx="15" cy="15" r="5" fill="#4382e0"/></svg></div>
  <div class="task pressed"><svg width="32" height="32"><path d="M0 0H32V32H0z" fill="#efcdd1"/><path d="M0 0H32L0 26z" fill="#fbf1f2"/><use href="#redA" x="5" y="2" width="22" height="22"/></svg></div>
  <div class="task"><svg width="34" height="32"><path d="M4 22C-1 12 10 4 20 4C30 4 34 12 29 19C25 26 18 19 15 23C14 30 7 28 4 22z" fill="#a9d0e8" stroke="#4f86ad"/><circle cx="9" cy="17" r="2.500" fill="#c7382e"/><circle cx="13" cy="11" r="2.500" fill="#58a83c"/><circle cx="20" cy="9" r="2.500" fill="#fff"/><circle cx="10" cy="23" r="2" fill="#fff"/><path d="M28 5L21 30" stroke="#d08a3c" stroke-width="3"/><circle cx="29" cy="4" r="3.500" fill="#c99d5c"/></svg></div>
  <div class="task"><svg width="32" height="32"><path d="M3.500 2.500H29.500V29.500H3.500z" fill="#f4f8fc" stroke="#2a5ca0" stroke-width="2"/><path d="M22 16H32V26L27 29H22z" fill="#fff" stroke="#b9cbe0"/></svg><b class="word">W</b></div>
  <div class="links">Vínculos</div>
  <div class="lang">ES</div>
  <div class="tray">
    <svg width="16" height="16"><path d="M1 1H15V15H1z" fill="#b91818"/><path d="M4 12C7 9 9 5 8 3C6 5 9 9 13 9C9 8 6 10 4 12z" fill="none" stroke="#fff"/></svg>
    <svg width="18" height="14"><path d="M1 7C4 2 9 1 17 1V13C9 13 4 12 1 7z" fill="#6fae1e"/><path d="M4 7C7 3 12 5 12 7C12 9 8 11 6 8" fill="none" stroke="#e6f5d0" stroke-width="1.500"/></svg>
    <svg width="18" height="18"><circle cx="9" cy="9" r="6.500" fill="#fff" stroke="#f2a51b" stroke-width="3"/><circle cx="9" cy="9" r="2" fill="none" stroke="#f2a51b" stroke-width="2"/><path d="M11 12H17" stroke="#f2a51b" stroke-width="2"/></svg>
    <svg width="18" height="18"><path d="M3.500 2V17M4 3C8 1 9 5 16 4L14 9C9 10 8 7 4 9z" fill="#fff" stroke="#555" stroke-width="1.200"/></svg>
    <svg width="18" height="18"><path d="M2 6H5L9 2V16L5 12H2z" fill="#fff" stroke="#555"/><path d="M11 6Q13 9 11 12M13 4Q17 9 13 14" fill="none" stroke="#555"/></svg>
    <svg width="18" height="18"><path d="M6.500 5.500H16.500V13.500H6.500z" fill="#fff" stroke="#444"/><path d="M1.500 1.500h4v5h-4zM3.500 6V16H14" fill="#ddd" stroke="#444"/></svg>
    <div class="clock">09:02 p.m. AMQ<br>10/02/2015</div>
    <svg width="16" height="18"><path d="M1 4H16V13H1z" fill="#2c63ad"/><path d="M1 4H16L1 9z" fill="#6f9ed8"/><path d="M9 14H15V17H9z" fill="#777"/></svg>
  </div>
</div>

</body>
</html>
```
FILE: styles.css
```css
* {
  box-sizing: border-box;
}

body {
  margin: 0;
  width: 1436px;
  height: 896px;
  overflow: hidden;
  background: linear-gradient(#a9c4de 0, #c5d6e8 3px, #e8e8e8 3px, #e8e8e8 60px, #222 60px, #222 100px, #eee 100px);
  font-family: "DejaVu Sans Condensed", "DejaVu Sans", sans-serif;
  font-size: 11px;
  color: #f0f0f0;
}

svg {
  display: block;
  flex: none;
}

.sprite {
  position: absolute;
}

.app {
  margin: 3px 0 0 2px;
  height: 853px;
  border: solid #5d5d5d;
  border-width: 0 2px 3px 4px;
  background: #3a3a3a;
  display: flex;
  flex-direction: column;
  position: relative;
}

.caret {
  width: 0;
  height: 0;
  flex: none;
  border: 3px solid transparent;
  border-top-color: #eee;
  border-bottom: 0;
  justify-self: center;
}

.caret.big-c {
  border-width: 4px 4px 0;
  display: inline-block;
}

.caret.dark {
  border-width: 4px 3px 0;
  border-top-color: #333;
}

.caret.grey {
  border-top-color: #777;
}

/* title bar */

.titlebar {
  height: 27px;
  flex: none;
  background: linear-gradient(#8d8d8d, #767676 40%, #4e4e4e);
  border-bottom: 1px solid #333;
  display: flex;
  align-items: center;
}

.app-button {
  position: absolute;
  left: 0;
  top: 3px;
  z-index: 2;
  width: 41px;
  height: 41px;
  border: 1px solid #111;
  background: linear-gradient(#b0b0b0, #858585 50%, #6c6c6c);
  display: flex;
  align-items: center;
  gap: 2px;
  padding-left: 3px;
}

.qat {
  width: 380px;
  padding-left: 46px;
  display: grid;
  grid-template-columns: repeat(6, 24px) 12px 24px 12px 18px;
  align-items: center;
  justify-items: center;
}

.titlebar h1 {
  width: 410px;
  margin: 0 0 0 3px;
  text-align: center;
  font-size: 11.500px;
  font-weight: bold;
  letter-spacing: -.18px;
  white-space: nowrap;
}

.infocenter {
  padding-left: 131px;
  display: flex;
  align-items: center;
}

.search {
  width: 180px;
  height: 21px;
  margin: 0 5px 0 4px;
  padding-left: 3px;
  line-height: 19px;
  border: 1px solid #333;
  background: #696969;
  color: #bbb;
  font-style: italic;
  letter-spacing: -.13px;
}

.infocenter svg + svg {
  margin-left: 8px;
}

.login {
  width: 84px;
  margin-left: 3px;
  letter-spacing: -.15px;
}

.infocenter .caret + svg {
  margin-left: 9px;
}

.infocenter svg + .caret {
  margin-left: 4px;
}

.sep {
  height: 16px;
  margin: 0 9px;
  border-left: 1px solid #888;
}

.help {
  width: 16px;
  height: 16px;
  margin-right: 9px;
  border-radius: 50%;
  background: #f2f5fa;
  color: #1d4fa0;
  font: bold 13px/16px "Liberation Sans", sans-serif;
  text-align: center;
}

.infocenter .caret + .winbtns {
  margin-left: 21px;
}

/* ribbon tabs */

.tabs {
  height: 21px;
  flex: none;
  padding-left: 46px;
  background: #535353;
  border-bottom: 1px solid #333;
  display: flex;
  align-items: center;
}

.tabs span {
  margin: 0 10px;
  color: #dcdcdc;
  letter-spacing: -.28px;
  white-space: nowrap;
}

.tabs .active {
  height: 20px;
  margin: 1px 0 0;
  width: 45px;
  line-height: 17px;
  text-align: center;
  background: #5f5f5f;
  border: 1px solid #2d2d2d;
  border-bottom: 0;
  color: #fff;
}

.tabs svg {
  margin: 0 6px 0 22px;
}

/* ribbon */

.ribbon {
  height: 98px;
  flex: none;
  display: flex;
  background: linear-gradient(#545454, #373737);
  border-bottom: 1px solid #858585;
}

.panel {
  height: 97px;
  flex: none;
  background: #5b5b5b;
  border-left: 1px solid #6c6c6c;
  border-right: 1px solid #373737;
  border-bottom: 1px solid #444;
  display: flex;
  flex-direction: column;
}

.panel .body {
  height: 77px;
  padding-top: 4px;
  display: flex;
  position: relative;
}

.panel .body.col {
  flex-direction: column;
}

.panel footer {
  height: 19px;
  padding-top: 1px;
  background: linear-gradient(#4b4b4b, #535353);
  display: flex;
  align-items: center;
  justify-content: center;
  gap: 6px;
  position: relative;
  white-space: nowrap;
}

.panel .with-launch {
  padding-right: 13px;
}

.launch {
  position: absolute;
  right: 4px;
  bottom: 5px;
  width: 5px;
  height: 5px;
  border: solid #ddd;
  border-width: 0 1px 1px 0;
  background: linear-gradient(45deg, transparent 40%, #ddd 40%, #ddd 60%, transparent 60%);
}

.p-model { width: 221px; }
.p-mesh { width: 77px; }
.p-solid { width: 92px; }
.p-draw { width: 96px; }
.p-mod { width: 146px; }
.p-sec { width: 73px; }
.p-coord { width: 145px; }
.p-view { width: 144px; }
.p-sel { width: 172px; }
.p-base { width: 60px; }

.big {
  display: flex;
  flex-direction: column;
  align-items: center;
  text-align: center;
  line-height: 13px;
  letter-spacing: -.1px;
  white-space: nowrap;
}

.big span {
  margin-top: 5px;
}

.big .caret {
  margin-top: 2px;
}

.wide { width: 127px; }
.ext { width: 62px; }
.mesh { width: 49px; }
.sec { width: 69px; }
.base { width: 58px; }

.criba {
  width: 38px;
  height: 72px;
  margin-left: 1px;
  background: linear-gradient(#6d8fc0, #4a689c 60%, #4d6da5);
  border: 1px solid #2e4468;
}

.criba span {
  margin-top: 4px;
}

.filtro { width: 61px; }
.gizmo { width: 66px; }

.caret.gz {
  position: absolute;
  right: 4px;
  top: 55px;
}

.grid {
  display: grid;
  grid-auto-rows: 24px;
  align-items: center;
  justify-items: center;
}

.g1 { grid-template-columns: 23px; }
.p-model .g1 { margin-left: 3px; }
.g-solid { grid-template-columns: 28px 28px 22px 12px; }
.g-draw { margin-left: 6px; grid-template-columns: 22px 24px 34px 0; }
.g-mod { grid-template-columns: 28px 27px 22px 34px 14px 20px; }
.g-coord { grid-template-columns: 28px 2px 46px 10px 38px 10px; }

.combo {
  width: 139px;
  height: 21px;
  margin: 1px 0 3px 1px;
  padding: 0 3px;
  display: flex;
  align-items: center;
  background: linear-gradient(#4c4c4c, #5f5f5f);
  border: 1px solid #333;
  letter-spacing: -.1px;
  white-space: nowrap;
}

.combo span {
  flex: 1;
}

.combo.ucs {
  grid-column: 3 / 7;
  width: 100px;
  margin: 0 0 0 11px;
  justify-self: start;
  padding-right: 1px;
}

.viewrow {
  display: flex;
  align-items: center;
  gap: 5px;
  padding: 2px 0 0 5px;
}

.closed {
  width: 61px;
  padding: 3px 0 4px;
  align-items: center;
  background: linear-gradient(#666, #4d4d4d);
  border: 1px solid #383838;
}

.closed span {
  flex: 1;
  padding-top: 3px;
  line-height: 13px;
}

/* document tabs */

.doctabs {
  height: 30px;
  flex: none;
  background: linear-gradient(#333, #3a3a3a);
  border-bottom: 3px solid #5d6060;
  position: relative;
}

.doctabs span {
  position: absolute;
  left: 31px;
  top: 9px;
}

/* drawing area */

.viewport {
  height: 574px;
  flex: none;
  position: relative;
  background: #20272e;
}

.viewlabel {
  position: absolute;
  left: 3px;
  top: 7px;
  color: #ddd;
  letter-spacing: .28px;
}

.viewbtns {
  position: absolute;
  right: 11px;
  top: 9px;
}

.wcs {
  position: absolute;
  left: 1325px;
  top: 162px;
  width: 68px;
  height: 16px;
  padding: 0 4px 0 3px;
  line-height: 14px;
  border-radius: 3px;
  background: #878d98;
  border: 1px solid #9a9fa8;
  color: #4a5059;
  font-family: "Liberation Sans", sans-serif;
  letter-spacing: -.2px;
  display: flex;
  align-items: center;
  justify-content: space-between;
}

.wcs i {
  border: 4px solid transparent;
  border-top: 4px solid #a3a8b1;
  border-bottom: 0;
}

.mark text {
  font-family: "Liberation Serif", serif;
  font-size: 60px;
  fill: #f2f2ef;
  fill-opacity: .88;
  filter: drop-shadow(1px 2px 1px #3d3d3d);
}

.mark .cjk {
  font-family: "Noto Sans CJK SC", sans-serif;
  font-size: 56px;
  font-weight: 100;
}

.cube {
  font: bold 6.500px "Liberation Sans", sans-serif;
  fill: #3b3f43;
}

.cube.side {
  font-size: 5.500px;
}

.compass text {
  font-family: "Liberation Sans", sans-serif;
  font-weight: bold;
  fill: #b5b9bc;
}

/* command line */

.command {
  height: 69px;
  flex: none;
  padding-top: 3px;
  background: #5d5d5d;
  display: flex;
}

.grip {
  width: 22px;
  background: linear-gradient(#777, #333);
}

.cmdlines {
  flex: 1;
  margin-left: 1px;
  padding: 12px 0 0;
  background: #c6c6c6;
  color: #000;
  font: 12px/15px "DejaVu Sans Mono", monospace;
  letter-spacing: -.15px;
}

.cmdlines p {
  margin: 0 0 0 2px;
}

.prompt {
  height: 24px;
  margin-top: 1px;
  padding: 0 5px;
  display: flex;
  align-items: center;
  gap: 3px;
  background: #fff;
  border-top: 1px solid #888;
}

.prompt em {
  margin-left: 4px;
  color: #777;
  letter-spacing: -.2px;
}

/* layout tabs and status bar */

.bottom {
  height: 28px;
  flex: none;
  display: flex;
  justify-content: space-between;
  border-bottom: 1px solid #777;
}

.layouts {
  position: relative;
  display: flex;
  padding: 3px 0 0 22px;
  color: #ccc;
  letter-spacing: -.1px;
}

.layouts svg {
  position: absolute;
  left: 0;
  top: 0;
}

.layouts span {
  position: relative;
  width: 91px;
}

.layouts .on {
  width: 64px;
  font-weight: bold;
  color: #fff;
}

.status {
  margin: 2px 0 1px;
  display: flex;
}

.status > div {
  margin-right: 1px;
  padding: 0 3px;
  border: 1px solid #757575;
  background: #454545;
  display: flex;
  align-items: center;
  justify-content: space-around;
}

.status .s-model {
  width: 58px;
  padding: 0;
  font-size: 12px;
  letter-spacing: .2px;
}

.status .s-anno {
  width: 110px;
  font-size: 12px;
}

.status .s-full {
  width: 50px;
  margin-right: 0;
}

.s-grid { width: 66px; }
.s-ortho { width: 103px; }
.s-snap { width: 65px; }
.s-gear { width: 42px; }
.s-plus { width: 26px; }
.s-hw { width: 26px; }
.s-iso { width: 48px; }

/* windows taskbar */

.taskbar {
  height: 40px;
  padding-left: 2px;
  background: #d4d0c8;
  border-top: 1px solid #fff;
  color: #000;
  display: flex;
}

.start {
  width: 54px;
  height: 36px;
  margin: 3px 8px 0 0;
  padding-left: 2px;
  display: flex;
  align-items: center;
  border: solid #555;
  border-width: 0 2px 0 0;
  box-shadow: inset 0 1px #fff;
}

.task {
  width: 48px;
  height: 37px;
  margin: 2px 2px 0 0;
  display: flex;
  align-items: center;
  justify-content: center;
  border: 1px solid #fff;
  border-right: 2px solid #555;
  border-bottom: 0;
  position: relative;
}

.task.pressed {
  background: #fff;
  border-color: #444 #eee #fff #444;
  border-left-width: 2px;
}

.word {
  position: absolute;
  left: 11px;
  top: 3px;
  color: #1d4f9e;
  font: bold 21px/26px "Liberation Sans", sans-serif;
}

.links {
  margin-left: auto;
  padding-top: 15px;
  letter-spacing: -.25px;
}

.lang {
  width: 20px;
  height: 24px;
  margin: 10px 3px 0 9px;
  padding-top: 3px;
  border-right: 1px solid #888;
}

.tray {
  width: 259px;
  height: 36px;
  margin-top: 3px;
  padding-left: 5px;
  border: solid #888;
  border-width: 1px 0 0 1px;
  display: flex;
  align-items: center;
  gap: 6.500px;
}

.clock {
  width: 84px;
  margin-left: 3px;
  text-align: center;
  line-height: 16px;
  white-space: nowrap;
}
```
